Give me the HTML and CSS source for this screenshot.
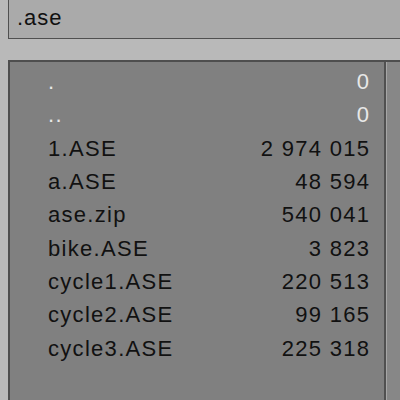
FILE: index.html
```html
<!DOCTYPE html>
<html lang="en">
<head>
    <meta charset="UTF-8">
    <title>File browser</title>
    <link rel="stylesheet" href="styles.css">
</head>
<body>

    <div class="filter-field">.ase</div>

    <div class="file-panel">
        <div class="file-list">
            <div class="file-row dir"><span class="name">.</span><span class="size">0</span></div>
            <div class="file-row dir"><span class="name">..</span><span class="size">0</span></div>
            <div class="file-row"><span class="name">1.ASE</span><span class="size">2 974 015</span></div>
            <div class="file-row"><span class="name">a.ASE</span><span class="size">48 594</span></div>
            <div class="file-row"><span class="name">ase.zip</span><span class="size">540 041</span></div>
            <div class="file-row"><span class="name">bike.ASE</span><span class="size">3 823</span></div>
            <div class="file-row"><span class="name">cycle1.ASE</span><span class="size">220 513</span></div>
            <div class="file-row"><span class="name">cycle2.ASE</span><span class="size">99 165</span></div>
            <div class="file-row"><span class="name">cycle3.ASE</span><span class="size">225 318</span></div>
        </div>
        <div class="scroll-side"></div>
    </div>

</body>
</html>
```

FILE: styles.css
```css
html, body {
    margin: 0;
    height: 100%;
    overflow: hidden;
}

body {
    background: #b9b9b9;
    font-family: 'Liberation Sans', Arial, sans-serif;
    font-size: 22px;
    color: #111;
}

.filter-field {
    margin-left: 8px;
    height: 39px;
    box-sizing: border-box;
    padding: 5px 0 0 8px;
    line-height: 26px;
    background: #aaaaaa;
    border-left: 1px solid #505050;
    border-bottom: 1px solid #505050;
    letter-spacing: 1px;
}

.file-panel {
    margin: 21px 0 0 8px;
    height: 340px;
    display: flex;
    background: #808080;
    border-top: 2px solid #4e4e4e;
    border-left: 2px solid #4e4e4e;
}

.file-list {
    flex: 1;
    padding: 3px 15px 0 38px;
    border-right: 2px solid #505050;
}

.file-row {
    display: flex;
    justify-content: space-between;
    height: 33.33px;
    line-height: 33.33px;
    letter-spacing: 1.3px;
    white-space: nowrap;
}

.size {
    margin-right: -1.3px;
}

.file-row.dir {
    color: #e8e8e8;
}

.scroll-side {
    width: 13px;
    background: #878787;
    border-left: 1px solid #a6a6a6;
}
```
